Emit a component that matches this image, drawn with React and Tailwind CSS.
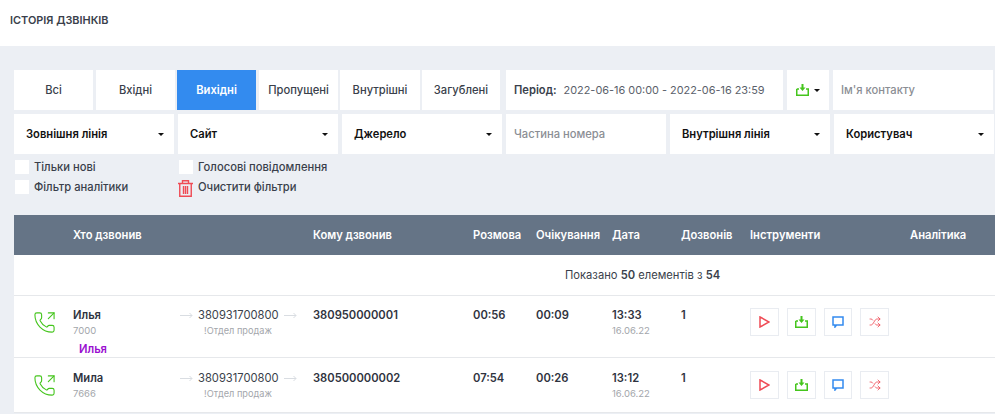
import React from 'react';
import { PhoneOutgoing, Shuffle } from 'lucide-react';

const font = { fontFamily: 'Inter, "Noto Sans", sans-serif' };

const tabs = [
    { label: 'Всі', w: 'w-[79px]', mr: 'mr-[3px]' },
    { label: 'Вхідні', w: 'w-[79px]', mr: 'mr-[2px]' },
    { label: 'Вихідні', w: 'w-[79px]', mr: 'mr-[3px]', active: true },
    { label: 'Пропущені', w: 'w-[79px]', mr: 'mr-[2px]' },
    { label: 'Внутрішні', w: 'w-[80px]', mr: 'mr-[2px]' },
    { label: 'Загублені', w: 'w-[78px]', mr: 'mr-[6px]' },
];

const Caret = () => (
    <span className="w-0 h-0 border-x-[3px] border-x-transparent border-t-[3px] border-t-[#111]" />
);

const DownloadIcon = () => (
    <svg viewBox="0 0 13 12" width="13" height="12">
        <path d="M0.75 5V11.25H12.25V5H10M0.75 5H3" fill="none" stroke="#45c51d" strokeWidth="1.5" />
        <path d="M5.5 0H7.5V3.5H9.5L6.5 7L3.5 3.5H5.5Z" fill="#45c51d" />
    </svg>
);

const Select = ({ label, w, mr }) => (
    <div className={`${w} ${mr} h-10 bg-white flex items-center justify-between pl-3 pr-[10px] text-[11.2px] font-semibold text-[#111]`}>
        {label}
        <Caret />
    </div>
);

const Check = ({ label, w }) => (
    <div className={`${w} h-[14px] flex items-center gap-[5px] text-[11.2px] font-medium text-[#3a3f4b]`}>
        <span className="w-[14px] h-[14px] ml-px bg-white shrink-0" />
        {label}
    </div>
);

const Arrow = () => (
    <svg width="13" height="7" viewBox="0 0 13 7" className="shrink-0">
        <path d="M0 3.5H12M9.5 1L12 3.5L9.5 6" fill="none" stroke="#d9dde2" strokeWidth="1" />
    </svg>
);

const ToolButton = ({ w, children }) => (
    <span className={`${w} h-7 border border-[#e9ecf1] flex items-center justify-center`}>{children}</span>
);

const CallRow = ({ name, ext, to, talk, wait, time, tag, h, iconTop, top }) => (
    <div className={`${h} flex bg-white border-b border-[#e6e8eb] text-[11.2px] text-[#2f3340]`}>
        <div className={`w-[59px] pl-[19px] ${iconTop} shrink-0 text-[#45c51d]`}>
            <PhoneOutgoing size={23} strokeWidth={1.15} />
        </div>
        <div className={`w-[107px] ${top} shrink-0 relative`}>
            <div className="font-semibold leading-[14px]">{name}</div>
            <div className="text-[9.5px] leading-[14px] mt-[2px] text-[#a3a6ab]">{ext}</div>
            {tag && <div className="absolute left-[6px] top-[46px] font-semibold leading-[14px] text-[#9a0fd0]">{tag}</div>}
        </div>
        <div className={`w-[133px] ${top} shrink-0`}>
            <div className="flex items-center gap-[5px] leading-[14px] text-[#3a3f4b]">
                <Arrow />
                380931700800
                <Arrow />
            </div>
            <div className="text-[9.2px] leading-[14px] mt-[2px] pl-[24px] text-[#a3a6ab]">!Отдел продаж</div>
        </div>
        <div className={`w-[160px] ${top} shrink-0 font-semibold leading-[14px]`}>{to}</div>
        <div className={`w-[63px] ${top} shrink-0 font-semibold leading-[14px]`}>{talk}</div>
        <div className={`w-[76px] ${top} shrink-0 font-semibold leading-[14px]`}>{wait}</div>
        <div className={`w-[69px] ${top} shrink-0`}>
            <div className="font-semibold leading-[14px]">{time}</div>
            <div className="text-[9.5px] leading-[14px] mt-[2px] text-[#a3a6ab]">16.06.22</div>
        </div>
        <div className={`w-[69px] ${top} shrink-0 font-semibold leading-[14px]`}>1</div>
        <div className={`${top} flex gap-[8px] items-start`}>
            <ToolButton w="w-[29px]">
                <svg width="11" height="12" viewBox="0 0 11 12">
                    <path d="M1 1L10 6L1 11Z" fill="none" stroke="#ef4b55" strokeWidth="1.5" />
                </svg>
            </ToolButton>
            <ToolButton w="w-[29px]"><DownloadIcon /></ToolButton>
            <ToolButton w="w-[28px]">
                <svg width="12" height="12" viewBox="0 0 12 12">
                    <path d="M1 1H11V9H4.5L3 11V9H1Z" fill="none" stroke="#338bef" strokeWidth="1.5" />
                </svg>
            </ToolButton>
            <ToolButton w="w-[29px]"><Shuffle size={12} strokeWidth={1.6} className="text-[#ef4b55]" /></ToolButton>
        </div>
    </div>
);

export default function App() {
    return (
        <div className="w-[995px] h-[414px] overflow-hidden bg-[#eceff4]" style={font}>
            <div className="h-[46px] bg-white pl-[10px] pt-[13px] text-[10.9px] leading-[14px] font-semibold text-[#3a3f4b]">
                ІСТОРІЯ ДЗВІНКІВ
            </div>

            <div className="pl-[14px] pt-[24px]">
                <div className="flex h-10">
                    {tabs.map((t) => (
                        <div
                            key={t.label}
                            className={`${t.w} ${t.mr} flex items-center justify-center text-[11.2px] font-medium ${
                                t.active ? 'bg-[#338bef] text-white font-semibold' : 'bg-white text-[#3a3f4b]'
                            }`}
                        >
                            {t.label}
                        </div>
                    ))}
                    <div className="w-[277px] mr-[4px] bg-white flex items-center pl-2 text-[10.9px] whitespace-nowrap text-[#5b5f6b]">
                        <span className="text-[11.2px] font-semibold text-[#3a3f4b] mr-[7px]">Період:</span>
                        2022-06-16 00:00 - 2022-06-16 23:59
                    </div>
                    <div className="w-[42px] mr-[4px] bg-white flex items-center justify-center gap-[5px]">
                        <DownloadIcon />
                        <Caret />
                    </div>
                    <div className="w-[160px] bg-white flex items-center pl-2 text-[11.2px] font-medium text-[#8b8e94]">Ім'я контакту</div>
                </div>

                <div className="flex h-10 mt-[4px]">
                    <Select label="Зовнішня лінія" w="w-[160px]" mr="mr-[4px]" />
                    <Select label="Сайт" w="w-[160px]" mr="mr-[4px]" />
                    <Select label="Джерело" w="w-[160px]" mr="mr-[4px]" />
                    <div className="w-[160px] mr-[4px] bg-white flex items-center pl-2 text-[11.2px] font-medium text-[#8b8e94]">Частина номера</div>
                    <Select label="Внутрішня лінія" w="w-[160px]" mr="mr-[4px]" />
                    <Select label="Користувач" w="w-[160px]" mr="" />
                </div>

                <div className="flex mt-[6px]">
                    <Check label="Тільки нові" w="w-[164px]" />
                    <Check label="Голосові повідомлення" />
                </div>
                <div className="flex mt-[6px]">
                    <Check label="Фільтр аналітики" w="w-[164px]" />
                    <div className="h-[14px] flex items-center gap-[5px] text-[11.2px] font-medium text-[#3a3f4b]">
                        <svg width="15" height="17" viewBox="0 0 15 17" className="shrink-0 mt-[3px]">
                            <path d="M0 3.5H15M4.5 3V0.75H10.5V3M1.75 3.5V16.25H13.25V3.5M5.5 6V14M7.5 6V14M9.5 6V14" fill="none" stroke="#ef4b55" strokeWidth="1.4" />
                        </svg>
                        Очистити фільтри
                    </div>
                </div>

                <div className="mt-[21px] h-10 bg-[#657486] flex items-center text-[11.2px] font-semibold text-white">
                    <div className="w-[59px]" />
                    <div className="w-[240px]">Хто дзвонив</div>
                    <div className="w-[160px]">Кому дзвонив</div>
                    <div className="w-[63px]">Розмова</div>
                    <div className="w-[76px]">Очікування</div>
                    <div className="w-[69px]">Дата</div>
                    <div className="w-[69px]">Дозвонів</div>
                    <div className="w-[160px]">Інструменти</div>
                    <div>Аналітика</div>
                </div>

                <div className="h-[41px] bg-white border-b border-[#e6e8eb] flex items-center pl-[551px] text-[11.2px] text-[#3a3f4b]">
                    Показано&nbsp;<b className="font-semibold">50</b>&nbsp;елементів з&nbsp;<b className="font-semibold">54</b>
                </div>

                <CallRow h="h-[62px]" iconTop="pt-[15px]" top="pt-[12px]" name="Илья" ext="7000" to="380950000001" talk="00:56" wait="00:09" time="13:33" tag="Илья" />
                <CallRow h="h-[55px]" iconTop="pt-[16px]" top="pt-[13px]" name="Мила" ext="7666" to="380500000002" talk="07:54" wait="00:26" time="13:12" />
            </div>
        </div>
    );
}
